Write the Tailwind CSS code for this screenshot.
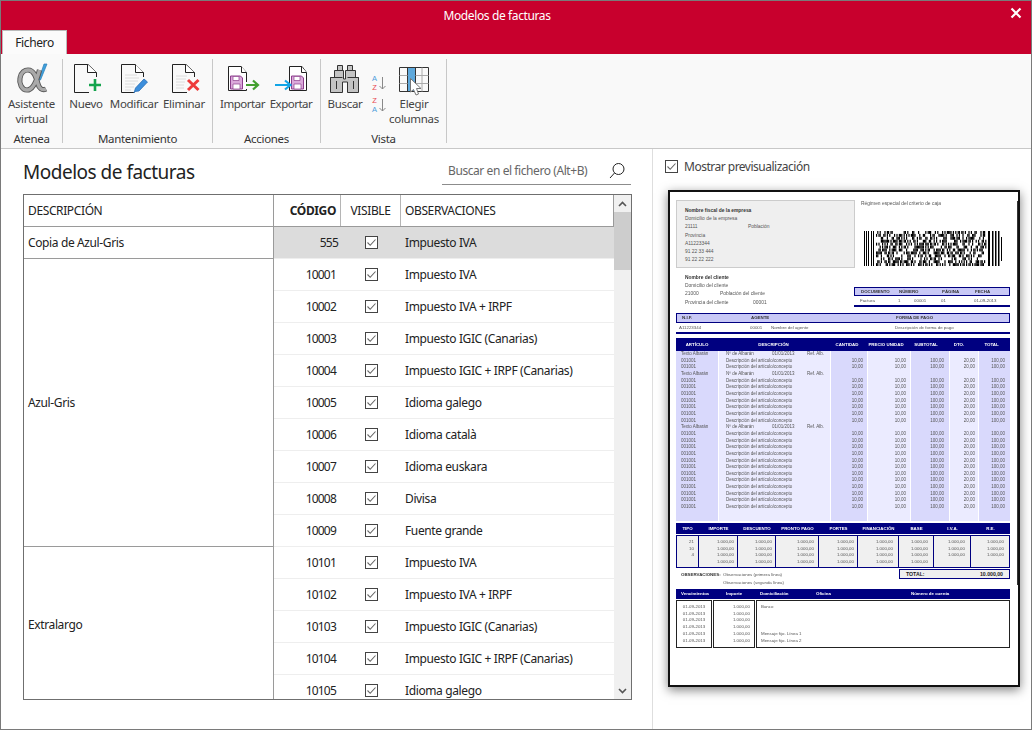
<!DOCTYPE html>
<html lang="es">
<head>
<meta charset="UTF-8" />
<title>Modelos de facturas</title>
<script src="https://cdn.jsdelivr.net/npm/@tailwindcss/browser@4"></script>
</head>
<body class="bg-white font-['Noto_Sans',sans-serif] text-[12px] text-[#222] tracking-[-0.38px]">
<svg class="hidden">
  <symbol id="chk" viewBox="0 0 13 13"><rect x="0.5" y="0.5" width="12" height="12" fill="#fff" stroke="#444"/><path d="M2.5 6.5 5.2 9.3 10.5 3.5" fill="none" stroke="#666" stroke-width="1.1"/></symbol>
</svg>

<div class="w-[1032px] h-[730px] border border-[#7a7a7a] flex flex-col overflow-hidden">
  <!-- title bar -->
  <div class="h-[53px] bg-[#c8002d] relative shrink-0">
    <div class="h-[29px] flex items-center justify-center text-white pr-[38px]">Modelos de facturas</div>
    <svg class="absolute right-[9px] top-[6px]" width="12" height="12" viewBox="0 0 12 12"><path d="M1.5 1.5 10.5 10.5M10.5 1.5 1.5 10.5" stroke="#fff" stroke-width="2.2"/></svg>
    <div class="absolute left-[1px] bottom-0 w-[65px] h-[24px] bg-[#fbfbfb] border border-b-0 border-[#bbb] flex items-center justify-center text-[#222]">Fichero</div>
  </div>

  <!-- ribbon -->
  <div class="h-[95px] bg-[#f9f9f9] border-b border-[#c8c8c8] flex shrink-0 text-[#444] text-[11.5px] tracking-[-0.3px] pt-[5px]">
    <div class="w-[62px] h-[84px] border-r border-[#c8c8c8] flex flex-col">
      <div class="h-[75px] shrink-0 flex flex-col items-center text-center leading-[15px] pt-[3px]">
        <svg width="34" height="34" viewBox="0 0 34 34" class="shrink-0">
          <path d="M29 2 23.5 18 25.5 18 32 2Z" fill="#3f9fdc" stroke="#2d7fb8" stroke-width="0.7"/>
          <path d="M24.5 8C22 18 18 28 12 28 6.5 28 4 21 5 16 6 10 10 8 13 8 19 8 21 15 23 22 24 26 27 29 31 27" fill="none" stroke="#555" stroke-width="5.2"/>
          <path d="M24.5 8C22 18 18 28 12 28 6.5 28 4 21 5 16 6 10 10 8 13 8 19 8 21 15 23 22 24 26 27 29 31 27" fill="none" stroke="#a9a9a9" stroke-width="3.4"/>
        </svg>
        <span>Asistente<br>virtual</span>
      </div>
      <div class="text-center leading-[9px] text-[#333]">Atenea</div>
    </div>

    <div class="w-[150px] h-[84px] border-r border-[#c8c8c8] flex flex-col">
      <div class="h-[75px] shrink-0 flex pt-[3px]">
        <div class="w-[46px] flex flex-col items-center text-center leading-[15px]">
          <svg width="34" height="34" viewBox="0 0 34 34" class="shrink-0"><path d="M27.5 15V10.5L19 2.5H5.5V30.5H20" fill="none" stroke="#222"/><path d="M18.5 2.5V10.5H27.5" fill="#fff" stroke="#222"/><path d="M26 17V29M20 23H32" stroke="#14a44d" stroke-width="2.6"/></svg>
          <span>Nuevo</span>
        </div>
        <div class="w-[50px] flex flex-col items-center text-center leading-[15px]">
          <svg width="34" height="34" viewBox="0 0 34 34" class="shrink-0"><path d="M26.5 15V10.5L18 2.5H4.5V30.5H17" fill="none" stroke="#222"/><path d="M18.5 2.5V10.5H26.5" fill="#fff" stroke="#222"/><path d="M8 13H20M8 16H22M8 19H21M8 22H18M8 25H17M8 28H14" stroke="#dcdcdc"/><path d="M18 29.5 17 31 18.5 26 27 17 30.5 20 22 29Z" fill="#3d8fdc" stroke="#2a6fb5" stroke-width="0.8"/></svg>
          <span>Modificar</span>
        </div>
        <div class="w-[50px] flex flex-col items-center text-center leading-[15px]">
          <svg width="34" height="34" viewBox="0 0 34 34" class="shrink-0"><path d="M27.5 15V10.5L19 2.5H5.5V30.5H20" fill="none" stroke="#222"/><path d="M18.5 2.5V10.5H27.5" fill="#fff" stroke="#222"/><path d="M9 14H20M9 17H19M9 20H18M9 23H17M9 26H17" stroke="#dcdcdc"/><path d="M21 18 31.5 28M31.5 18 21 28" stroke="#ee3b3b" stroke-width="3"/></svg>
          <span>Eliminar</span>
        </div>
      </div>
      <div class="text-center leading-[9px] text-[#333]">Mantenimiento</div>
    </div>

    <div class="w-[108px] h-[84px] border-r border-[#c8c8c8] flex flex-col">
      <div class="h-[75px] shrink-0 flex pl-[5px] pt-[3px] tracking-[-0.5px]">
        <div class="w-[49px] flex flex-col items-center text-center leading-[15px]">
          <svg width="36" height="34" viewBox="0 0 36 34" class="shrink-0"><path d="M21.5 20V10.5L16 4.5H3.5V28.5H21.5V27" fill="#fff" stroke="#222"/><path d="M16.5 4.5V10.5H21.5" fill="#fff" stroke="#222"/><path d="M5.5 14H15.5L17.5 16V27H5.5Z" fill="#dba9db" stroke="#8d3f8d"/><path d="M8 14.5H14V18.5H8ZM8 22H15V27H8Z" fill="#fff" stroke="#8d3f8d" stroke-width="0.7"/><path d="M21 23H32M28 18.5 33 23 28 27.5" fill="none" stroke="#43a02f" stroke-width="2.2"/></svg>
          <span>Importar</span>
        </div>
        <div class="w-[48px] flex flex-col items-center text-center leading-[15px]">
          <svg width="36" height="34" viewBox="0 0 36 34" class="shrink-0"><path d="M16.5 4.5H29L33.5 10.5V28.5H16.5V4.5Z" fill="#fff" stroke="#222"/><path d="M28.5 4.5V10.5H33.5" fill="#fff" stroke="#222"/><path d="M18.5 14H28.5L30.5 16V27H18.5Z" fill="#dba9db" stroke="#8d3f8d"/><path d="M21 14.5H27V18.5H21ZM21 22H28V27H21Z" fill="#fff" stroke="#8d3f8d" stroke-width="0.7"/><path d="M2 23H17M12 18.5 17.5 23 12 27.5" fill="none" stroke="#12a5e6" stroke-width="2.2"/></svg>
          <span>Exportar</span>
        </div>
      </div>
      <div class="text-center leading-[9px] text-[#333] tracking-[-0.3px]">Acciones</div>
    </div>

    <div class="w-[126px] h-[84px] border-r border-[#c8c8c8] flex flex-col">
      <div class="h-[75px] shrink-0 flex pt-[3px]">
        <div class="w-[48px] flex flex-col items-center text-center leading-[15px]">
          <svg width="34" height="34" viewBox="0 0 34 34" class="shrink-0">
            <path d="M9.5 3.5H14.5V8.5H9.5ZM19.5 3.5H24.5V8.5H19.5Z" fill="#c4c4c4" stroke="#333"/>
            <path d="M6.5 8.5H15.5V17H17.5V8.5H27.5V15.5H30.5V30.5H19.5V20H14.5V30.5H2.5V15.5H6.5Z" fill="#c4c4c4" stroke="#333"/>
            <path d="M2.5 15.5H14.5M19.5 15.5H30.5M8.5 19V27M25.5 19V27" stroke="#333"/>
          </svg>
          <span>Buscar</span>
        </div>
        <div class="w-[17px] flex flex-col gap-[4px] pt-[12px] shrink-0 font-['Liberation_Sans',sans-serif] text-[7.5px] leading-[9px] tracking-normal">
          <div class="flex items-center gap-[2px] pl-[3px]">
            <span class="flex flex-col items-center"><span class="text-[#4c9ddb]">A</span><span class="text-[#e8484f]">Z</span></span>
            <svg width="7" height="14" viewBox="0 0 7 14"><path d="M3.5 1V13M0.5 10 3.5 13 6.5 10" fill="none" stroke="#888"/></svg>
          </div>
          <div class="flex items-center gap-[2px] pl-[3px]">
            <span class="flex flex-col items-center"><span class="text-[#e8484f]">Z</span><span class="text-[#4c9ddb]">A</span></span>
            <svg width="7" height="14" viewBox="0 0 7 14"><path d="M3.5 1V13M0.5 10 3.5 13 6.5 10" fill="none" stroke="#888"/></svg>
          </div>
        </div>
        <div class="w-[56px] flex flex-col items-center text-center leading-[15px]">
          <svg width="34" height="34" viewBox="0 0 34 34" class="shrink-0">
            <rect x="10" y="5.5" width="9" height="24" fill="#5fa9dc"/>
            <path d="M2.5 5.5H31.5V29.5H2.5ZM10.5 5.5V29.5M18.5 5.5V29.5" fill="none" stroke="#333"/>
            <path d="M2.5 13.5H10.5M2.5 21.5H10.5M18.5 13.5H31.5M18.5 21.5H31.5M25 5.5V29.5" stroke="#aaa"/>
            <path d="M13.5 16.5V30L16.5 27.5 19 33 21.5 32 19.5 26.5H24Z" fill="#fff" stroke="#777"/>
          </svg>
          <span class="text-center">Elegir<br>columnas</span>
        </div>
      </div>
      <div class="text-center leading-[9px] text-[#333]">Vista</div>
    </div>
  </div>

  <!-- body -->
  <div class="flex flex-1 min-h-0">
    <div class="w-[652px] border-r border-[#dedede] pl-[22px] shrink-0">
      <div class="h-[45px] w-[609px] flex items-start justify-between">
        <h1 class="text-[19px] leading-[26px] mt-[10px] text-[#222] tracking-[-0.5px]">Modelos de facturas</h1>
        <div class="w-[189px] h-[27px] mt-[9px] mr-[1px] border-b border-[#8c8c8c] flex items-center justify-between pl-[6px] pr-[5px] text-[#666] tracking-[-0.42px]">
          <span>Buscar en el fichero (Alt+B)</span>
          <svg width="18" height="18" viewBox="0 0 18 18"><circle cx="10.5" cy="7" r="5.5" fill="none" stroke="#222"/><path d="M6.5 11 2 16" stroke="#222"/></svg>
        </div>
      </div>

      <div class="w-[609px] h-[506px] border border-[#6f6f6f] flex overflow-hidden">
        <div class="w-[250px] shrink-0 border-r border-[#9a9a9a] flex flex-col">
          <div class="h-[32px] border-b border-[#9a9a9a] flex items-center pl-[4px] shrink-0">DESCRIPCIÓN</div>
          <div class="h-[32px] border-b border-[#9a9a9a] flex items-center pl-[4px] shrink-0">Copia de Azul-Gris</div>
          <div class="h-[288px] border-b border-[#9a9a9a] flex items-center pl-[4px] shrink-0">Azul-Gris</div>
          <div class="flex-1 flex items-center pl-[4px] pt-[4px]">Extralargo</div>
        </div>
        <div class="w-[340px] shrink-0 flex flex-col overflow-hidden">
          <div class="h-[32px] flex border-b border-r border-[#9a9a9a] shrink-0">
            <div class="w-[67px] border-r border-[#b5b5b5] flex items-center justify-end pr-[4px] font-bold">CÓDIGO</div>
            <div class="w-[60px] border-r border-[#b5b5b5] flex items-center justify-center">VISIBLE</div>
            <div class="flex-1 flex items-center pl-[4px]">OBSERVACIONES</div>
          </div>
          <div class="h-[32px] shrink-0 flex items-center bg-[#dcdcdc] border-b border-[#eee]"><span class="w-[64px] text-right tracking-[-0.8px]">555</span><span class="w-[66px] flex justify-center"><svg width="13" height="13"><use href="#chk"/></svg></span><span class="pl-[1px]">Impuesto IVA</span></div>
          <div class="h-[32px] shrink-0 flex items-center border-b border-[#eee]"><span class="w-[62px] text-right mr-[2px] tracking-[-0.8px]">10001</span><span class="w-[66px] flex justify-center"><svg width="13" height="13"><use href="#chk"/></svg></span><span class="pl-[1px]">Impuesto IVA</span></div>
          <div class="h-[32px] shrink-0 flex items-center border-b border-[#eee]"><span class="w-[62px] text-right mr-[2px] tracking-[-0.8px]">10002</span><span class="w-[66px] flex justify-center"><svg width="13" height="13"><use href="#chk"/></svg></span><span class="pl-[1px]">Impuesto IVA + IRPF</span></div>
          <div class="h-[32px] shrink-0 flex items-center border-b border-[#eee]"><span class="w-[62px] text-right mr-[2px] tracking-[-0.8px]">10003</span><span class="w-[66px] flex justify-center"><svg width="13" height="13"><use href="#chk"/></svg></span><span class="pl-[1px]">Impuesto IGIC (Canarias)</span></div>
          <div class="h-[32px] shrink-0 flex items-center border-b border-[#eee]"><span class="w-[62px] text-right mr-[2px] tracking-[-0.8px]">10004</span><span class="w-[66px] flex justify-center"><svg width="13" height="13"><use href="#chk"/></svg></span><span class="pl-[1px]">Impuesto IGIC + IRPF (Canarias)</span></div>
          <div class="h-[32px] shrink-0 flex items-center border-b border-[#eee]"><span class="w-[62px] text-right mr-[2px] tracking-[-0.8px]">10005</span><span class="w-[66px] flex justify-center"><svg width="13" height="13"><use href="#chk"/></svg></span><span class="pl-[1px]">Idioma galego</span></div>
          <div class="h-[32px] shrink-0 flex items-center border-b border-[#eee]"><span class="w-[62px] text-right mr-[2px] tracking-[-0.8px]">10006</span><span class="w-[66px] flex justify-center"><svg width="13" height="13"><use href="#chk"/></svg></span><span class="pl-[1px]">Idioma català</span></div>
          <div class="h-[32px] shrink-0 flex items-center border-b border-[#eee]"><span class="w-[62px] text-right mr-[2px] tracking-[-0.8px]">10007</span><span class="w-[66px] flex justify-center"><svg width="13" height="13"><use href="#chk"/></svg></span><span class="pl-[1px]">Idioma euskara</span></div>
          <div class="h-[32px] shrink-0 flex items-center border-b border-[#eee]"><span class="w-[62px] text-right mr-[2px] tracking-[-0.8px]">10008</span><span class="w-[66px] flex justify-center"><svg width="13" height="13"><use href="#chk"/></svg></span><span class="pl-[1px]">Divisa</span></div>
          <div class="h-[32px] shrink-0 flex items-center border-b border-[#eee]"><span class="w-[62px] text-right mr-[2px] tracking-[-0.8px]">10009</span><span class="w-[66px] flex justify-center"><svg width="13" height="13"><use href="#chk"/></svg></span><span class="pl-[1px]">Fuente grande</span></div>
          <div class="h-[32px] shrink-0 flex items-center border-b border-[#eee]"><span class="w-[62px] text-right mr-[2px] tracking-[-0.8px]">10101</span><span class="w-[66px] flex justify-center"><svg width="13" height="13"><use href="#chk"/></svg></span><span class="pl-[1px]">Impuesto IVA</span></div>
          <div class="h-[32px] shrink-0 flex items-center border-b border-[#eee]"><span class="w-[62px] text-right mr-[2px] tracking-[-0.8px]">10102</span><span class="w-[66px] flex justify-center"><svg width="13" height="13"><use href="#chk"/></svg></span><span class="pl-[1px]">Impuesto IVA + IRPF</span></div>
          <div class="h-[32px] shrink-0 flex items-center border-b border-[#eee]"><span class="w-[62px] text-right mr-[2px] tracking-[-0.8px]">10103</span><span class="w-[66px] flex justify-center"><svg width="13" height="13"><use href="#chk"/></svg></span><span class="pl-[1px]">Impuesto IGIC (Canarias)</span></div>
          <div class="h-[32px] shrink-0 flex items-center border-b border-[#eee]"><span class="w-[62px] text-right mr-[2px] tracking-[-0.8px]">10104</span><span class="w-[66px] flex justify-center"><svg width="13" height="13"><use href="#chk"/></svg></span><span class="pl-[1px]">Impuesto IGIC + IRPF (Canarias)</span></div>
          <div class="h-[32px] shrink-0 flex items-center border-b border-[#eee]"><span class="w-[62px] text-right mr-[2px] tracking-[-0.8px]">10105</span><span class="w-[66px] flex justify-center"><svg width="13" height="13"><use href="#chk"/></svg></span><span class="pl-[1px]">Idioma galego</span></div>
        </div>
        <!-- scrollbar -->
        <div class="flex-1 bg-[#f0f0f0] flex flex-col items-center">
          <div class="h-[17px] flex items-center shrink-0"><svg width="9" height="6" viewBox="0 0 9 6"><path d="M1 5 4.5 1.5 8 5" fill="none" stroke="#555" stroke-width="1.6"/></svg></div>
          <div class="h-[58px] w-full bg-[#cdcdcd] shrink-0"></div>
          <div class="flex-1"></div>
          <div class="h-[17px] flex items-center shrink-0"><svg width="9" height="6" viewBox="0 0 9 6"><path d="M1 1 4.5 4.5 8 1" fill="none" stroke="#555" stroke-width="1.6"/></svg></div>
        </div>
      </div>
    </div>

    <!-- preview -->
    <div class="flex-1 pl-[12px]">
      <label class="h-[35px] mb-[6px] flex items-center gap-[6px] text-[#444] tracking-[-0.5px]"><svg width="13" height="13"><use href="#chk"/></svg>Mostrar previsualización</label>

      <div class="w-[352px] h-[497px] bg-white border-2 border-[#111] shadow-[0_3px_10px_rgba(0,0,0,0.5)] ml-[3px] relative overflow-hidden font-['Liberation_Sans',sans-serif] text-[4.9px] leading-[6px] tracking-normal text-[#555] pt-[8px] pl-[6px] pr-[8px] blur-[0.3px]">
        <div class="absolute right-[0px] top-[9px] h-[384px] w-[1px] bg-[#333]"></div>
        <!-- empresa + barcode -->
        <div class="flex h-[68px]">
          <div class="w-[179px] h-[68px] bg-[#efefef] border border-[#ccc] pl-[8px] pt-[6px] leading-[8.2px] shrink-0">
            <div class="font-bold text-[#333]">Nombre fiscal de la empresa</div>
            <div>Domicilio de la empresa</div>
            <div class="flex"><span class="w-[63px]">21111</span><span>Población</span></div>
            <div>Provincia</div>
            <div>A11223344</div>
            <div>91 22 33 444</div>
            <div>91 22 22 222</div>
          </div>
          <div class="pl-[6px] flex-1">
            <div class="pt-[1px]">Régimen especial del criterio de caja</div>
            <svg id="barcode" class="mt-[24px] ml-[3px]" width="142" height="35" viewBox="0 0 142 35"></svg>
          </div>
        </div>
        <!-- cliente + documento -->
        <div class="flex h-[45px]">
          <div class="w-[178px] pl-[9px] pt-[6px] leading-[8.2px] shrink-0">
            <div class="font-bold text-[#333]">Nombre del cliente</div>
            <div>Domicilio del cliente</div>
            <div class="flex"><span class="w-[35px]">21000</span><span>Población del cliente</span></div>
            <div class="flex"><span class="w-[68px]">Provincia del cliente</span><span>00001</span></div>
          </div>
          <div class="w-[156px] pt-[19px]">
            <div class="h-[9px] bg-[#c8c8f6] border border-[#000080] flex items-center font-bold text-[#333] text-[4.4px]"><span class="w-[44px] pl-[6px]">DOCUMENTO</span><span class="w-[43px]">NÚMERO</span><span class="w-[33px]">PÁGINA</span><span>FECHA</span></div>
            <div class="h-[9px] flex items-center text-[4.4px]"><span class="w-[44px] pl-[6px]">Factura</span><span class="w-[16px]">1</span><span class="w-[27px]">00001</span><span class="w-[33px]">01</span><span>01-09-2013</span></div>
            <div class="h-[2px] bg-[#000080]"></div>
          </div>
        </div>
        <!-- nif -->
        <div class="h-[10px] bg-[#c8c8f6] border border-[#000080] flex items-center font-bold text-[#333] text-[4.4px]"><span class="w-[74px] pl-[5px]">N.I.F.</span><span class="w-[145px]">AGENTE</span><span>FORMA DE PAGO</span></div>
        <div class="h-[9px] flex items-center text-[4.4px]"><span class="w-[74px] pl-[3px]">A11223344</span><span class="w-[21px]">00001</span><span class="w-[124px]">Nombre del agente</span><span>Descripción de forma de pago</span></div>
        <div class="h-[2px] bg-[#000080]"></div>
        <!-- detalle -->
        <div class="mt-[4px] h-[13px] bg-[#000080] grid grid-cols-[42px_111px_36px_42px_38px_28px_1fr] items-center text-white font-bold text-center text-[4.4px]"><span>ARTÍCULO</span><span>DESCRIPCIÓN</span><span>CANTIDAD</span><span>PRECIO UNIDAD</span><span>SUBTOTAL</span><span>DTO.</span><span>TOTAL</span></div>
        <div id="lines" class="h-[170px] flex flex-col"></div>
        <!-- totales -->
        <div class="mt-[2px] h-[11px] bg-[#000080] grid grid-cols-[23px_39px_38px_43px_39px_41px_35px_37px_1fr] items-center text-white font-bold text-center text-[4.4px]"><span>TIPO</span><span>IMPORTE</span><span>DESCUENTO</span><span>PRONTO PAGO</span><span>PORTES</span><span>FINANCIACIÓN</span><span>BASE</span><span>I.V.A.</span><span>R.E.</span></div>
        <div class="mt-[1px] h-[33px] bg-[#f0f0f0] border border-[#000080] grid grid-cols-[22px_39px_38px_43px_39px_41px_35px_37px_1fr] text-right text-[4.4px] leading-[6.6px] pt-[3px]">
          <div class="pr-[4px] border-r border-[#000080] -mt-[3px] pt-[3px]">21<br>10<br>4</div>
          <div class="pr-[3px] border-r border-[#000080] -mt-[3px] pt-[3px]">1.000,00<br>1.000,00<br>1.000,00<br>1.000,00</div>
          <div class="pr-[3px] border-r border-[#000080] -mt-[3px] pt-[3px]">1.000,00<br>1.000,00<br>1.000,00<br>1.000,00</div>
          <div class="pr-[4px] border-r border-[#000080] -mt-[3px] pt-[3px]">1.000,00<br>1.000,00<br>1.000,00<br>1.000,00</div>
          <div class="pr-[3px] border-r border-[#000080] -mt-[3px] pt-[3px]">1.000,00<br>1.000,00<br>1.000,00<br>1.000,00</div>
          <div class="pr-[5px] border-r border-[#000080] -mt-[3px] pt-[3px]">1.000,00<br>1.000,00<br>1.000,00<br>1.000,00</div>
          <div class="pr-[5px] border-r border-[#000080] -mt-[3px] pt-[3px]">1.000,00<br>1.000,00<br>1.000,00<br>1.000,00</div>
          <div class="pr-[5px] border-r border-[#000080] -mt-[3px] pt-[3px]">1.000,00<br>1.000,00<br>1.000,00</div>
          <div class="pr-[5px]">1.000,00<br>1.000,00<br>1.000,00</div>
        </div>
        <!-- observaciones + total -->
        <div class="h-[21px] flex relative">
          <div class="pl-[5px] pt-[3px] leading-[8px] flex text-[4.4px]"><span class="w-[42px] font-bold text-[#333]">OBSERVACIONES:</span><span>Observaciones (primera línea)<br>Observaciones (segunda línea)</span></div>
          <div class="absolute right-0 top-[1px] w-[111px] h-[10px] bg-[#efefef] border border-[#000080] flex items-center justify-between px-[6px] font-bold text-[#222] text-[5.2px]"><span>TOTAL:</span><span>10.000,00</span></div>
        </div>
        <!-- vencimientos -->
        <div class="h-[10px] bg-[#000080] flex items-center text-white font-bold text-[4.4px]"><span class="w-[42px] pl-[5px]">Vencimientos</span><span class="w-[36px] pl-[8px]">Importe</span><span class="w-[62px] pl-[6px]">Domiciliación</span><span class="w-[95px]">Oficina</span><span>Número de cuenta</span></div>
        <div class="h-[48px] mt-[1px] flex gap-[1px] text-[4.4px] leading-[6.7px]">
          <div class="w-[36px] border border-[#222] text-center pt-[3px]">01-09-2013<br>01-09-2013<br>01-09-2013<br>01-09-2013<br>01-09-2013<br>01-09-2013</div>
          <div class="w-[42px] border border-[#222] text-right pr-[4px] pt-[3px]">1.000,00<br>1.000,00<br>1.000,00<br>1.000,00<br>1.000,00<br>1.000,00</div>
          <div class="flex-1 border border-[#222] pl-[4px] pt-[3px]">Banco<br><br><br><br>Mensaje fijo. Línea 1<br>Mensaje fijo. Línea 2</div>
        </div>
      </div>
    </div>
  </div>
</div>

<script>
  // lineas del detalle de la factura
  const lines = document.getElementById("lines");
  const albaran = [0, 3, 11];
  for (let i = 0; i < 25; i++) {
    const row = document.createElement("div");
    row.className = i < 24
      ? "h-[6.67px] shrink-0 grid grid-cols-[42px_111px_36px_42px_38px_28px_1fr] gap-x-[1px] text-[4.5px] leading-[6.67px]"
      : "flex-1 grid grid-cols-[42px_111px_36px_42px_38px_28px_1fr] gap-x-[1px]";
    let c1 = "001001", c2 = "Descripción del artículo/concepto", nums = ["10,00", "10,00", "100,00", "20,00", "100,00"];
    if (i == 24) { c1 = ""; c2 = ""; nums = ["", "", "", "", ""]; }
    if (albaran.includes(i)) {
      c1 = "Texto Albarán";
      c2 = '<span class="flex"><span class="w-[46px]">Nº de Albarán</span><span class="w-[35px]">01/01/2013</span><span>Ref. Alb.</span></span>';
      nums = ["", "", "", "", ""];
    }
    row.innerHTML =
      `<div class="bg-[#d9d9fc] pl-[5px]">${c1}</div><div class="bg-[#ebebff] pl-[7px]">${c2}</div>` +
      `<div class="bg-[#d9d9fc] text-right pr-[4px]">${nums[0]}</div><div class="bg-[#ebebff] text-right pr-[4px]">${nums[1]}</div>` +
      `<div class="bg-[#d9d9fc] text-right pr-[5px]">${nums[2]}</div><div class="bg-[#ebebff] text-right pr-[3px]">${nums[3]}</div>` +
      `<div class="bg-[#d9d9fc] text-right pr-[5px]">${nums[4]}</div>`;
    lines.appendChild(row);
  }

  // barcode pdf417 de mentira, solo para que se vea igual
  const bc = document.getElementById("barcode");
  let seed = 417, out = "";
  const rnd = () => (seed = (seed * 1103515245 + 12345) & 0x7fffffff) / 0x7fffffff;
  const bar = (x, w, y = 0, h = 35) => out += `<rect x="${x}" y="${y}" width="${w}" height="${h}"/>`;
  [0, 2, 4, 7, 9].forEach(x => bar(x, 1));
  for (let r = 0; r < 12; r++) for (let x = 12; x < 122; x += 1.2) if (rnd() > 0.5) bar(x, 1.2, r * 2.92, 2.92);
  [124, 128, 131, 134].forEach(x => bar(x, x == 124 ? 2 : 1.5));
  bar(137, 1, 6, 24);
  bc.innerHTML = out;
</script>
</body>
</html>
